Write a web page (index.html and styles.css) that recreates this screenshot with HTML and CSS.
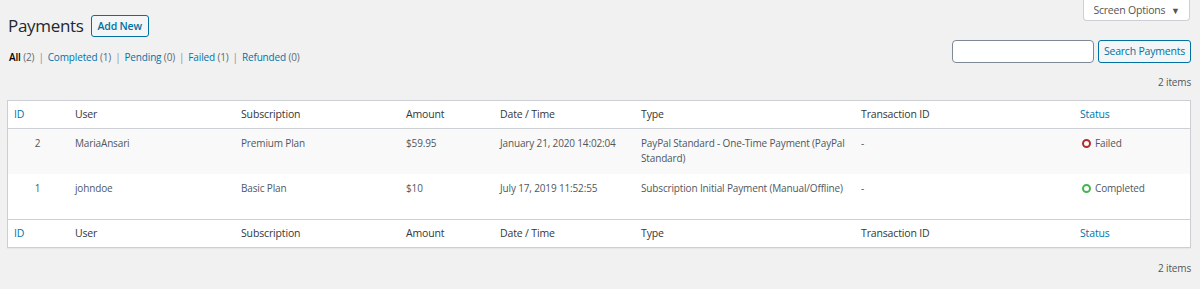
FILE: index.html
```html
<!DOCTYPE html>
<html lang="en">
<head>
  <meta charset="UTF-8" />
  <title>Payments</title>
  <link rel="stylesheet" href="styles.css">
</head>
<body>
  <div class="wrap">
    <div class="top-bar">
      <div class="title-group">
        <h1>Payments</h1>
        <a class="button" href="#">Add New</a>
      </div>
      <button class="screen-options">Screen Options <span class="arrow">&#9660;</span></button>
    </div>

    <div class="filter-bar">
      <ul class="subsubsub">
        <li><a class="current" href="#">All</a> <span class="count">(2)</span><span class="sep">|</span></li>
        <li><a href="#">Completed</a> <span class="count">(1)</span><span class="sep">|</span></li>
        <li><a href="#">Pending</a> <span class="count">(0)</span><span class="sep">|</span></li>
        <li><a href="#">Failed</a> <span class="count">(1)</span><span class="sep">|</span></li>
        <li><a href="#">Refunded</a> <span class="count">(0)</span></li>
      </ul>
      <form class="search-box">
        <input type="search" name="s">
        <button type="submit" class="button">Search Payments</button>
      </form>
    </div>

    <div class="tablenav">2 items</div>

    <table class="list-table">
      <colgroup>
        <col style="width: 59px">
        <col style="width: 166px">
        <col style="width: 165px">
        <col style="width: 94px">
        <col style="width: 141px">
        <col style="width: 220px">
        <col style="width: 219px">
        <col>
      </colgroup>
      <thead>
        <tr>
          <th class="col-id"><a href="#">ID</a></th>
          <th>User</th>
          <th>Subscription</th>
          <th>Amount</th>
          <th>Date / Time</th>
          <th>Type</th>
          <th>Transaction ID</th>
          <th><a href="#">Status</a></th>
        </tr>
      </thead>
      <tbody>
        <tr>
          <td class="col-id">2</td>
          <td>MariaAnsari</td>
          <td>Premium Plan</td>
          <td>$59.95</td>
          <td>January 21, 2020 14:02:04</td>
          <td class="col-type">PayPal Standard - One-Time Payment (PayPal Standard)</td>
          <td>-</td>
          <td><span class="status failed">Failed</span></td>
        </tr>
        <tr>
          <td class="col-id">1</td>
          <td>johndoe</td>
          <td>Basic Plan</td>
          <td>$10</td>
          <td>July 17, 2019 11:52:55</td>
          <td class="col-type">Subscription Initial Payment (Manual/Offline)</td>
          <td>-</td>
          <td><span class="status completed">Completed</span></td>
        </tr>
      </tbody>
      <tfoot>
        <tr>
          <th class="col-id"><a href="#">ID</a></th>
          <th>User</th>
          <th>Subscription</th>
          <th>Amount</th>
          <th>Date / Time</th>
          <th>Type</th>
          <th>Transaction ID</th>
          <th><a href="#">Status</a></th>
        </tr>
      </tfoot>
    </table>

    <div class="tablenav bottom">2 items</div>
  </div>
</body>
</html>
```

FILE: styles.css
```css
body {
  margin: 0;
  background-color: #f1f1f1;
  font-family: 'Open Sans', sans-serif;
  font-size: 10px;
  line-height: 15px;
  letter-spacing: -0.15px;
  color: #50575e;
}
a {
  color: #0073aa;
  text-decoration: none;
}
.wrap {
  padding: 0 9px 0 7px;
}
.top-bar {
  display: flex;
  justify-content: space-between;
  align-items: flex-start;
}
.title-group {
  display: flex;
  align-items: center;
  padding-top: 15px;
}
h1 {
  margin: 0 7px 0 1px;
  font-size: 17px;
  font-weight: 400;
  line-height: 22px;
  letter-spacing: -0.3px;
  color: #23282d;
}
.button {
  display: inline-block;
  box-sizing: border-box;
  height: 22px;
  padding: 0 7px;
  border: 1px solid #0071a1;
  border-radius: 3px;
  background-color: #f3f5f6;
  color: #0071a1;
  font-family: inherit;
  font-size: 10.5px;
  letter-spacing: -0.2px;
  line-height: 20px;
  cursor: pointer;
}
.title-group .button {
  width: 58px;
  padding: 0;
  font-weight: 600;
  text-align: center;
}
.screen-options {
  box-sizing: border-box;
  width: 107px;
  height: 21px;
  margin-right: 1px;
  padding: 0;
  border: 1px solid #ccd0d4;
  border-top: none;
  border-radius: 0 0 4px 4px;
  background-color: #fff;
  color: #555;
  font-family: inherit;
  font-size: 10.5px;
  letter-spacing: -0.2px;
}
.screen-options .arrow {
  margin-left: 3px;
  font-size: 9px;
}
.filter-bar {
  display: flex;
  justify-content: space-between;
  align-items: flex-start;
  height: 23px;
  margin-top: 3px;
}
.subsubsub {
  display: flex;
  list-style: none;
  margin: 10px 0 0 2px;
  padding: 0;
  color: #646970;
}
.subsubsub .current {
  color: #000;
  font-weight: 600;
}
.count {
  color: #646970;
}
.sep {
  margin: 0 4px;
  color: #8c8f94;
}
.search-box {
  display: flex;
  gap: 4px;
}
.search-box input {
  box-sizing: border-box;
  width: 142px;
  height: 23px;
  margin: 0;
  border: 1px solid #7e8993;
  border-radius: 4px;
  background-color: #fff;
}
.search-box .button {
  width: 93px;
  height: 23px;
  padding: 0;
  line-height: 21px;
}
.tablenav {
  margin-top: 12px;
  text-align: right;
  color: #555;
}
.list-table {
  width: 100%;
  margin-top: 10px;
  border: 1px solid #ccd0d4;
  border-spacing: 0;
  table-layout: fixed;
  background-color: #fff;
  box-shadow: 0 1px 1px rgba(0, 0, 0, 0.04);
}
.list-table th {
  height: 27px;
  padding: 0 8px;
  font-size: 10.5px;
  font-weight: 400;
  text-align: left;
  color: #32373c;
}
.list-table th.col-id {
  padding-left: 6px;
}
.list-table thead th {
  border-bottom: 1px solid #ccd0d4;
}
.list-table tfoot th {
  border-top: 1px solid #ccd0d4;
}
.list-table td {
  box-sizing: border-box;
  height: 45px;
  padding: 7px 8px 0;
  vertical-align: top;
}
.list-table tbody tr:nth-child(odd) td {
  background-color: #f9f9f9;
}
.list-table td.col-id {
  text-align: center;
}
.list-table td.col-type {
  padding-right: 4px;
}
.status::before {
  content: '';
  display: inline-block;
  box-sizing: border-box;
  width: 9px;
  height: 9px;
  margin: 0 4px 0 2px;
  border: 2px solid;
  border-radius: 50%;
  vertical-align: -1px;
}
.status.failed::before {
  border-color: #b32d2e;
}
.status.completed::before {
  border-color: #46b450;
}
.tablenav.bottom {
  margin-top: 13px;
}
```
